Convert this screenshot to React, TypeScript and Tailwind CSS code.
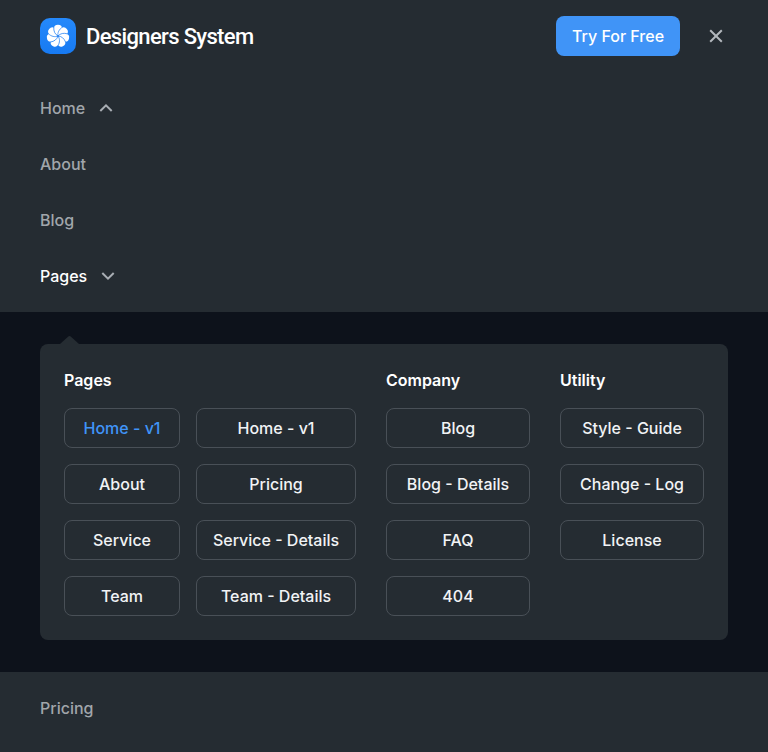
import React from "react";

const petals = [0, 51.43, 102.86, 154.29, 205.71, 257.14, 308.57];

function Logo() {
  return (
    <svg width="36" height="36" viewBox="0 0 36 36" fill="none" aria-hidden="true">
      <defs>
        <linearGradient id="logo-bg" x1="18" y1="0" x2="18" y2="36" gradientUnits="userSpaceOnUse">
          <stop stopColor="#2589fb" />
          <stop offset="1" stopColor="#177af2" />
        </linearGradient>
      </defs>
      <rect width="36" height="36" rx="10" fill="url(#logo-bg)" />
      {petals.map((a) => (
        <circle key={a} cx="18" cy="10.8" r="4.1" fill="#fff" transform={`rotate(${a} 18 18)`} />
      ))}
      <circle cx="18" cy="18" r="6" fill="#fff" />
      {petals.map((a) => (
        <path
          key={a}
          d="M18 18C17.4 14.6 19 11.4 22.3 9.2"
          stroke="#2180f3"
          strokeWidth="0.7"
          transform={`rotate(${a} 18 18)`}
        />
      ))}
      <circle cx="18" cy="18" r="0.8" fill="#2180f3" />
    </svg>
  );
}

function Chevron({ up = false }: { up?: boolean }) {
  return (
    <svg width="14" height="8" viewBox="0 0 14 8" fill="none" stroke="#a9aeb4" strokeWidth="2" aria-hidden="true">
      <path d={up ? "M1.3 7L7 1.4L12.7 7" : "M1.3 1L7 6.6L12.7 1"} />
    </svg>
  );
}

function NavItem({ label, active = false, children }: { label: string; active?: boolean; children?: React.ReactNode }) {
  return (
    <a className={`flex h-6 items-center ${active ? "text-white" : "text-[#a1a6ab]"}`}>
      {label}
      {children}
    </a>
  );
}

function Column({ items, width, active }: { items: string[]; width: string; active?: string }) {
  return (
    <div className={`flex flex-col gap-4 ${width}`}>
      {items.map((item) => (
        <a
          key={item}
          className={`flex h-10 items-center justify-center rounded-lg border border-[#495057] ${
            item === active ? "text-[#4094f7]" : "text-[#f1f3f5]"
          }`}
        >
          {item}
        </a>
      ))}
    </div>
  );
}

function Group({ title, children }: { title: string; children: React.ReactNode }) {
  return (
    <section>
      <h2 className="mb-4 h-6 font-semibold text-white">{title}</h2>
      <div className="flex gap-4">{children}</div>
    </section>
  );
}

export default function App() {
  return (
    <div className="h-[752px] w-[768px] overflow-hidden bg-[#252c32] font-['Inter',sans-serif] text-base leading-6 font-medium">
      <header className="flex h-[72px] items-center pr-[45px] pl-10">
        <Logo />
        <span className="ml-2.5 pt-0.5 font-['Roboto',sans-serif] text-[22px] font-medium tracking-[-0.65px] text-white">
          Designers System
        </span>
        <button className="ml-auto flex h-10 w-[124px] items-center justify-center rounded-lg bg-[#4094f7] text-white">
          Try For Free
        </button>
        <svg className="ml-[29px]" width="14" height="14" viewBox="0 0 14 14" stroke="#b3b8bd" strokeWidth="2" aria-hidden="true">
          <path d="M1.2 1.2L12.8 12.8M12.8 1.2L1.2 12.8" />
        </svg>
      </header>

      <nav className="flex h-60 flex-col gap-8 px-10 pt-6">
        <NavItem label="Home">
          <span className="ml-[14px]"><Chevron up /></span>
        </NavItem>
        <NavItem label="About" />
        <NavItem label="Blog" />
        <NavItem label="Pages" active>
          <span className="ml-[14px]"><Chevron /></span>
        </NavItem>
      </nav>

      <div className="h-[360px] bg-[#0d121b] px-10 pt-8">
        <div className="relative flex h-[296px] justify-between rounded-lg bg-[#252c32] p-6">
          <svg className="absolute -top-2 left-5" width="19" height="8" viewBox="0 0 19 8" fill="#252c32" aria-hidden="true">
            <path d="M0 8L8 0.7Q9.5 -0.5 11 0.7L19 8Z" />
          </svg>
          <Group title="Pages">
            <Column items={["Home - v1", "About", "Service", "Team"]} width="w-[116px]" active="Home - v1" />
            <Column items={["Home - v1", "Pricing", "Service - Details", "Team - Details"]} width="w-40" />
          </Group>
          <Group title="Company">
            <Column items={["Blog", "Blog - Details", "FAQ", "404"]} width="w-36" />
          </Group>
          <Group title="Utility">
            <Column items={["Style - Guide", "Change - Log", "License"]} width="w-36" />
          </Group>
        </div>
      </div>

      <div className="px-10 pt-6">
        <NavItem label="Pricing" />
      </div>
    </div>
  );
}
